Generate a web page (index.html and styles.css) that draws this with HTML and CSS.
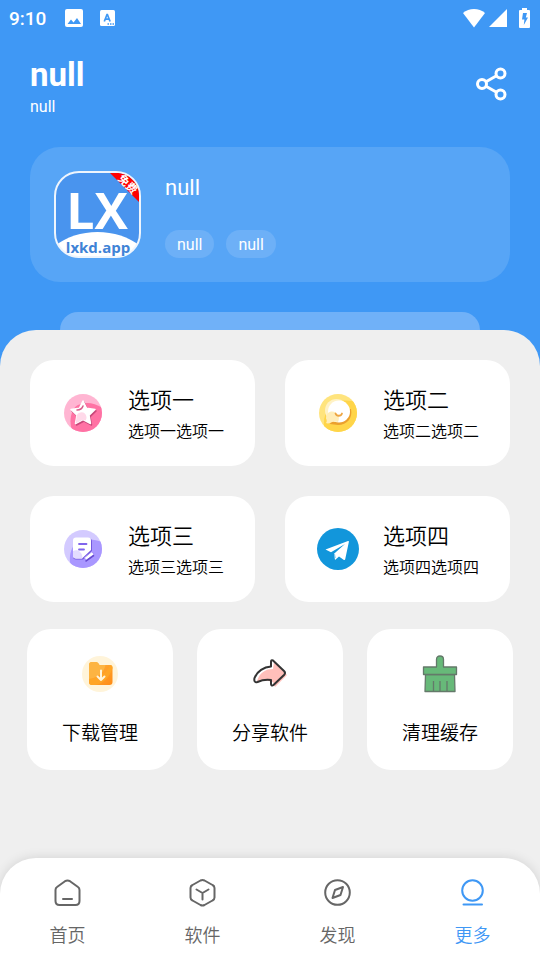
FILE: index.html
```html
<!DOCTYPE html>
<html lang="zh-CN">
<head>
    <meta charset="utf-8">
    <meta name="viewport" content="width=device-width, initial-scale=1">
    <title>更多</title>
    <link rel="stylesheet" href="styles.css">
</head>
<body>
    <div class="screen">
        <div class="status-bar">
            <span class="time">9:10</span>
            <svg class="status-picture" width="18" height="18" viewBox="0 0 18 18">
                <rect width="18" height="18" rx="2" fill="#fff"/>
                <path d="M2.500 15 6 10.500l2.500 3L12 9l4 6z" fill="#3f98f5"/>
            </svg>
            <svg class="status-input" width="15" height="16" viewBox="0 0 15 16">
                <rect width="15" height="16" rx="1.500" fill="#fff"/>
                <path d="m4.300 11.500 2.700-7h.4l2.700 7M5.300 9.200h3.800" fill="none" stroke="#3f98f5" stroke-width="1.700"/>
                <path d="M7.500 14H9M10 14h1.500M12.500 14H14" stroke="#3f98f5" stroke-width="1.500"/>
            </svg>
            <div class="status-right">
                <svg width="22" height="19" viewBox="0 0 22 19"><path d="M0 4C6-1.300 16-1.300 22 4L11 18.500z" fill="#fff"/></svg>
                <svg width="18" height="18" viewBox="0 0 18 18"><path d="M18 0v18H0z" fill="#fff"/></svg>
                <svg class="battery" width="11" height="20" viewBox="0 0 11 20">
                    <path d="M3 0h5v2h2a1 1 0 0 1 1 1v16a1 1 0 0 1-1 1H1a1 1 0 0 1-1-1V3a1 1 0 0 1 1-1h2z" fill="#fff"/>
                    <path d="M4 5h4L6.800 9.500H9L4.800 17l.6-5.500H3z" fill="#3f98f5"/>
                </svg>
            </div>
        </div>

        <header class="header">
            <div class="title-row">
                <div>
                    <h1>null</h1>
                    <p class="subtitle">null</p>
                </div>
                <button type="button" class="share" aria-label="分享">
                    <svg width="36" height="36" viewBox="0 0 36 36" fill="none" stroke="#fff" stroke-width="3">
                        <circle cx="8" cy="18" r="4.500"/>
                        <circle cx="26.500" cy="7.500" r="4.500"/>
                        <circle cx="26.500" cy="28.500" r="4.500"/>
                        <path d="M12 15.700 22.500 9.800M12 20.300l10.500 5.900"/>
                    </svg>
                </button>
            </div>

            <div class="app-card">
                <svg class="logo" width="87" height="87" viewBox="0 0 87 87">
                    <clipPath id="logoShape"><rect x="1" y="1" width="85" height="85" rx="24"/></clipPath>
                    <g clip-path="url(#logoShape)">
                        <rect width="87" height="87" fill="#4994ee"/>
                        <path d="M0 76C22 56 65 56 87 76v11H0z" fill="#fff"/>
                    </g>
                    <rect x="1" y="1" width="85" height="85" rx="24" fill="none" stroke="#eef5fd" stroke-width="2"/>
                    <path d="M56 2h6c13 0 23 10 23 23v6z" fill="#f00"/>
                    <text class="logo-name" x="43" y="58" text-anchor="middle">LX</text>
                    <text class="logo-site" x="44" y="82" text-anchor="middle">lxkd.app</text>
                    <text class="logo-flag" transform="translate(71 16) rotate(45)" text-anchor="middle">免费</text>
                </svg>
                <div class="app-info">
                    <h2>null</h2>
                    <div class="tags">
                        <span class="tag">null</span>
                        <span class="tag">null</span>
                    </div>
                </div>
            </div>
            <div class="peek"></div>
        </header>

        <div class="panel">
            <main>
                <div class="options">
                    <a class="option" href="#option1">
                        <svg width="42" height="42" viewBox="0 0 42 42">
                            <clipPath id="disc"><circle cx="21" cy="21" r="19"/></clipPath>
                            <g clip-path="url(#disc)">
                                <rect width="42" height="42" fill="#ffb5d2"/>
                                <path d="M42 17v25H12C6 33 8 17 16 13c8-4 18-2 26 4z" fill="#ff72a4"/>
                            </g>
                            <path d="m22 10.500 3.600 7.300 8.400 1.200-6 5.800 1.500 8.200-7.500-3.800-7.500 3.800 1.500-8.200-6-5.800 8.400-1.200z" fill="#c8487a" stroke="#c8487a" stroke-width="1.500" stroke-linejoin="round"/>
                            <path d="m21 9 3.600 7.300L33 17.500l-6 5.800 1.500 8.200-7.500-3.800-7.500 3.800 1.500-8.200-6-5.800 8.400-1.200z" fill="#fff" stroke="#fff" stroke-width="1.500" stroke-linejoin="round"/>
                            <path d="M13.500 31.500 15 23c2-4 9-4 9.500 2 0 1.500-.2 2.500-1 3.500l-2.500-.8z" fill="#ffd9e9"/>
                            <path d="M15 18c3 0 5-1 6-4" fill="none" stroke="#d85c8c" stroke-width="1.500" stroke-linecap="round"/>
                        </svg>
                        <div>
                            <h3>选项一</h3>
                            <p>选项一选项一</p>
                        </div>
                    </a>
                    <a class="option" href="#option2">
                        <svg width="42" height="42" viewBox="0 0 42 42">
                            <g clip-path="url(#disc)">
                                <rect width="42" height="42" fill="#ffe47d"/>
                                <path d="M42 12v30H9C5 32 7 22 12 16c7-8 20-10 30-4z" fill="#ffd549"/>
                            </g>
                            <circle cx="19.500" cy="18.500" r="11.500" fill="#fff2c5"/>
                            <path d="M34 17c2 9-4 16-13 16l-8-1 1-3c9 2 17-4 19-12z" fill="#eba02e"/>
                            <circle cx="22" cy="19.500" r="11" fill="#fff"/>
                            <path d="M9 31c1-1 1-3 0-4.500 0-9 10-9 12.500-2.500.8 2 .3 4.500-.5 6-4-.500-6 0-8 1-1.500.7-3 .5-4 0z" fill="#ffedb8"/>
                            <path d="M18.500 21.500c1 3 5.500 3 6.500 0" fill="none" stroke="#eda542" stroke-width="1.800" stroke-linecap="round"/>
                        </svg>
                        <div>
                            <h3>选项二</h3>
                            <p>选项二选项二</p>
                        </div>
                    </a>
                    <a class="option" href="#option3">
                        <svg width="42" height="42" viewBox="0 0 42 42">
                            <g clip-path="url(#disc)">
                                <rect width="42" height="42" fill="#d3caff"/>
                                <path d="M42 15v27H11C5 33 8 18 16 14c8-4 18-3 26 1z" fill="#a997ff"/>
                            </g>
                            <path d="M14 10.500h13a3 3 0 0 1 3 3V24l-9 7.500h-7a3 3 0 0 1-3-3z" fill="#7458df"/>
                            <path d="M14 9.500h12a3 3 0 0 1 3 3V22l-9 8.500h-6a3 3 0 0 1-3-3v-15a3 3 0 0 1 3-3z" fill="#fff"/>
                            <path d="M11 23c4-2 9 0 9.500 7l-.5.500h-6a3 3 0 0 1-3-3z" fill="#e3dcff"/>
                            <path d="M17 16h7.500M17 21.500h5" stroke="#8065ec" stroke-width="1.800" stroke-linecap="round"/>
                            <path d="m22 30 8-6.500 2 3-7.500 5.500z" fill="#fff" stroke="#a38df9" stroke-width="1"/>
                            <path d="m23.500 33.300 8.500-6" stroke="#6549ce" stroke-width="1.500"/>
                        </svg>
                        <div>
                            <h3>选项三</h3>
                            <p>选项三选项三</p>
                        </div>
                    </a>
                    <a class="option" href="#option4">
                        <svg width="42" height="42" viewBox="0 0 42 42">
                            <circle cx="21" cy="21" r="21" fill="#1296db"/>
                            <path d="M8.500 21.500 31 13c.7-.2 1 .1.900.8l-3.700 17.500c-.2.800-.7 1-1.300.6L22 28.500l-4 3.500-1-6.200L28 16 14 24.200z" fill="#fff"/>
                            <path d="m17.500 26 .8 4" stroke="#1296db" stroke-width=".5"/>
                        </svg>
                        <div>
                            <h3>选项四</h3>
                            <p>选项四选项四</p>
                        </div>
                    </a>
                </div>

                <div class="tools">
                    <button type="button" class="tool">
                        <svg width="40" height="40" viewBox="0 0 40 40">
                            <defs>
                                <linearGradient id="folder" x1="0" y1="0" x2="1" y2="1">
                                    <stop offset="0" stop-color="#ffb53c"/>
                                    <stop offset="1" stop-color="#ff8b16"/>
                                </linearGradient>
                            </defs>
                            <circle cx="20" cy="20" r="18" fill="#fff4da"/>
                            <path d="M9 11q0-3 3-3h4q2 0 3.500 3h10q3 0 3 3v14q0 3-3 3H12q-3 0-3-3z" fill="url(#folder)"/>
                            <path d="M9 11q0-3 3-3h4q2 0 3.500 3h6C24 19 17 24 9 25z" fill="#fdb442"/>
                            <path d="M9 25c10-1 18-6 21-14 2 0 2.500 1 2.500 3C30 23 23 30 15 31h-3q-3 0-3-3z" fill="#ffa526"/>
                            <path d="M21 16.500V26M17.500 22.500 21 26l3.500-3.500" fill="none" stroke="#fff4da" stroke-width="2" stroke-linecap="round" stroke-linejoin="round"/>
                        </svg>
                        <span>下载管理</span>
                    </button>
                    <button type="button" class="tool">
                        <svg width="40" height="40" viewBox="0 0 40 40">
                            <path d="m24 8 13 13-12 12-2-5q-6-2-16-1c3-9 9-12 16-12z" fill="#ffbfba"/>
                            <path d="M21 8q0-2.500 2-1.500L34 17q2 2 0 4L23.500 31q-2 1.500-2.500-1v-4q-7-1-13.500 2-4 1-3-4C7 17 14 13 21 12.500z" fill="none" stroke="#333" stroke-width="2" stroke-linejoin="round"/>
                        </svg>
                        <span>分享软件</span>
                    </button>
                    <button type="button" class="tool">
                        <svg width="40" height="40" viewBox="0 0 40 40" fill="#67b979" stroke="#64796a" stroke-width="1.300" stroke-linejoin="round">
                            <path d="M5.500 20.500h29L35 37.500H5z"/>
                            <path d="M3.500 13h13V5.500q0-3.500 3.500-3.500t3.500 3.500V13h13v7.500h-33z"/>
                            <path d="M13.500 27v10M20 27v10M27 27v10" fill="none"/>
                        </svg>
                        <span>清理缓存</span>
                    </button>
                </div>
            </main>

            <nav class="tab-bar">
                <a class="tab" href="#home">
                    <svg width="31" height="31" viewBox="0 0 31 31">
                        <path d="M3.500 12q0-2 1.500-3l8-5.800q2.500-1.500 5 0L26 9q1.500 1 1.500 3v11q0 4-4 4h-16q-4 0-4-4z"/>
                        <path d="M11 21h9"/>
                    </svg>
                    <span>首页</span>
                </a>
                <a class="tab" href="#software">
                    <svg width="31" height="31" viewBox="0 0 31 31">
                        <path d="M13.500 2.500q2-1 4 0l8 4.500q2 1 2 3v9.500q0 2-2 3l-8 4.500q-2 1-4 0l-8-4.500q-2-1-2-3V10q0-2 2-3z"/>
                        <path d="m9.500 11.500 6 3.500 6-3.500M15.500 15v6.500"/>
                    </svg>
                    <span>软件</span>
                </a>
                <a class="tab" href="#discover">
                    <svg width="31" height="31" viewBox="0 0 31 31">
                        <circle cx="15.500" cy="14.500" r="12.300"/>
                        <path d="m21 9-2.500 8-8 3 2.500-8z"/>
                    </svg>
                    <span>发现</span>
                </a>
                <a class="tab active" href="#more" aria-current="page">
                    <svg width="31" height="31" viewBox="0 0 31 31">
                        <circle cx="15.500" cy="12.500" r="10.300"/>
                        <path d="M6.500 26.500H25"/>
                    </svg>
                    <span>更多</span>
                </a>
            </nav>
        </div>
    </div>
</body>
</html>
```
FILE: styles.css
```css
* {
    box-sizing: border-box;
}

body {
    margin: 0;
    font-family: Roboto, "Noto Sans CJK SC DemiLight", "Noto Sans CJK SC", sans-serif;
    color: #000;
}

h1, h2, h3, p {
    margin: 0;
    font-weight: 400;
}

a {
    color: inherit;
    text-decoration: none;
}

button {
    border: 0;
    padding: 0;
    background: none;
    color: inherit;
    font-family: inherit;
    cursor: pointer;
}

svg {
    display: block;
    flex-shrink: 0;
}

.screen {
    display: flex;
    flex-direction: column;
    min-height: 100vh;
    background-color: #3f98f5;
}

/* Status bar */
.status-bar {
    display: flex;
    align-items: center;
    height: 36px;
    padding: 0 10px 0 9px;
    color: #fff;
}

.time {
    font-size: 19px;
    font-weight: 500;
}

.status-picture {
    margin-left: 19px;
}

.status-input {
    margin-left: 17px;
}

.status-right {
    display: flex;
    align-items: center;
    gap: 4px;
    margin-left: auto;
}

.battery {
    margin-left: 8px;
}

/* Header */
.header {
    padding: 19px 30px 0;
    color: #fff;
}

.title-row {
    display: flex;
    justify-content: space-between;
    align-items: flex-start;
}

h1 {
    font-size: 33px;
    font-weight: 700;
    line-height: 40px;
}

.subtitle {
    font-size: 16px;
    line-height: 24px;
}

.share {
    padding: 11px 0;
}

.app-card {
    display: flex;
    gap: 24px;
    margin-top: 28px;
    padding: 24px;
    border-radius: 30px;
    background-color: #57a5f6;
}

.logo {
    overflow: visible;
}

.logo-name {
    fill: #fff;
    font: 700 50px "Open Sans", sans-serif;
}

.logo-site {
    fill: #3f83d6;
    font: 700 15px "Open Sans", sans-serif;
}

.logo-flag {
    fill: #fff;
    font: 700 11px "Noto Sans CJK SC", sans-serif;
}

.app-info {
    display: flex;
    flex-direction: column;
    justify-content: space-between;
}

h2 {
    font-size: 22px;
    line-height: 34px;
}

.tags {
    display: flex;
    gap: 12px;
}

.tag {
    padding: 1px 12px 0;
    border-radius: 14px;
    background-color: #6db0f7;
    font-size: 16px;
    line-height: 27px;
}

.peek {
    height: 18px;
    margin: 30px 30px 0;
    border-radius: 18px 18px 0 0;
    background-color: #70b1f8;
}

/* Content */
.panel {
    display: flex;
    flex: 1;
    flex-direction: column;
    border-radius: 36px 36px 0 0;
    background-color: #efefef;
    font-weight: 350;
}

main {
    padding: 30px 0;
}

.options {
    display: grid;
    grid-template-columns: 1fr 1fr;
    gap: 30px;
    padding: 0 30px;
}

.option {
    display: flex;
    align-items: center;
    gap: 24px;
    height: 106px;
    padding-left: 32px;
    border-radius: 24px;
    background-color: #fff;
}

h3 {
    padding-top: 4px;
    font-size: 22px;
    font-weight: inherit;
    line-height: 34px;
}

.option p {
    font-size: 16px;
    font-weight: inherit;
    line-height: 28px;
}

.tools {
    display: grid;
    grid-template-columns: repeat(3, 1fr);
    gap: 24px;
    margin-top: 27px;
    padding: 0 27px;
}

.tool {
    display: flex;
    flex-direction: column;
    align-items: center;
    gap: 26px;
    padding: 25px 0 22px;
    border-radius: 24px;
    background-color: #fff;
    font-size: 19px;
    font-weight: inherit;
    line-height: 28px;
}

/* Bottom tabs */
.tab-bar {
    display: flex;
    margin-top: auto;
    padding: 20px 0 10px;
    border-radius: 36px 36px 0 0;
    background-color: #fff;
    box-shadow: 0 0 12px rgba(0, 0, 0, 0.12);
}

.tab {
    display: flex;
    flex: 1;
    flex-direction: column;
    align-items: center;
    gap: 13px;
    color: #666;
    font-size: 18px;
    line-height: 28px;
}

.tab svg {
    fill: none;
    stroke: currentColor;
    stroke-width: 2;
    stroke-linecap: round;
    stroke-linejoin: round;
}

.tab.active {
    color: #3f98f5;
}
```
